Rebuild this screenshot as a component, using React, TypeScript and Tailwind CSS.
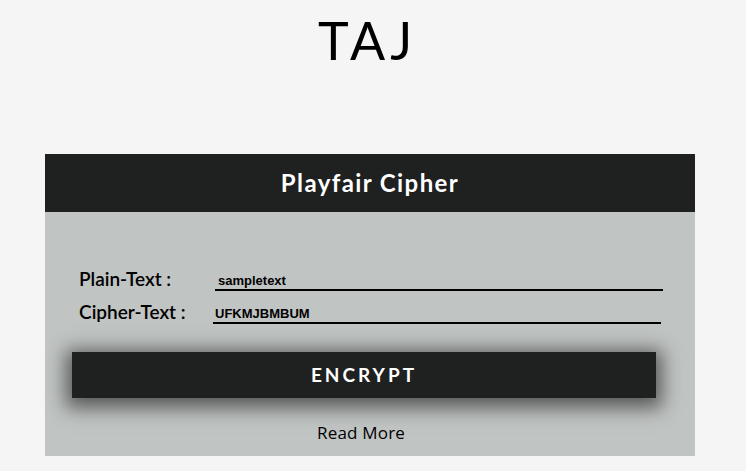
export default function App() {
  return (
    <div className="min-h-[471px] bg-[#f5f5f5] pt-[10px]">
      <h1 className="pr-[11px] text-center font-['Lato',sans-serif] text-[52px] font-normal leading-[60px] text-black tracking-[5px]">
        TAJ
      </h1>
      <section className="mx-[45px] mt-[84px] w-[650px] bg-[#c0c4c3]">
        <div className="flex h-[58px] items-center justify-center bg-[#1f2020]">
          <h2 className="font-['Lato',sans-serif] text-[24px] font-bold tracking-[1.4px] text-white">Playfair Cipher</h2>
        </div>
        <div className="pt-[54px]">
          <div className="flex h-[25px] items-end pl-[34px]">
            <label className="w-[136px] font-['Lato',sans-serif] text-[19px] font-semibold leading-[24px] text-black">
              Plain-Text :
            </label>
            <input
              readOnly
              value="sampletext"
              className="h-[25px] w-[448px] border-b-2 border-black bg-transparent pl-[3px] pt-[6px] font-['Liberation_Sans',sans-serif] text-[13px] font-bold text-black outline-none"
            />
          </div>
          <div className="mt-[8px] flex h-[25px] items-end pl-[34px]">
            <label className="w-[134px] font-['Lato',sans-serif] text-[19px] font-semibold leading-[24px] text-black">
              Cipher-Text :
            </label>
            <input
              readOnly
              value="UFKMJBMBUM"
              className="h-[25px] w-[448px] border-b-2 border-black bg-transparent pl-[2px] pt-[6px] font-['Liberation_Sans',sans-serif] text-[13px] font-bold text-black outline-none"
            />
          </div>
          <div className="pl-[27px] pt-[28px]">
            <button className="h-[46px] w-[584px] bg-[#1f2020] font-['Lato',sans-serif] text-[19px] font-bold tracking-[3px] text-white shadow-[0_4px_18px_6px_rgba(0,0,0,0.55)]">
              ENCRYPT
            </button>
          </div>
          <div className="pb-[10px] pr-[18px] pt-[22px] text-center">
            <a className="font-['Open_Sans',sans-serif] text-[17px] font-normal tracking-[0.2px] text-black">Read More</a>
          </div>
        </div>
      </section>
    </div>
  );
}
